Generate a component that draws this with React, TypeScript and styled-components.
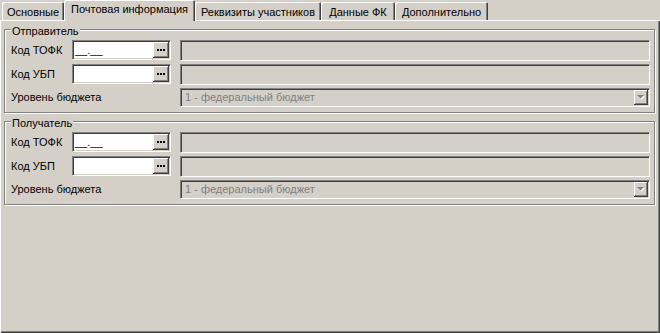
import React from "react";
import styled, { createGlobalStyle, css } from "styled-components";

const GlobalStyle = createGlobalStyle`
  html, body { margin: 0; padding: 0; background: #d4d0c8; }
  body {
    font-family: "Liberation Sans", Arial, sans-serif;
    font-size: 11px;
    color: #000;
  }
  * { box-sizing: border-box; }
`;

const Window = styled.div`
  width: 660px;
  height: 333px;
  background: #d4d0c8;
  display: flex;
  flex-direction: column;
  overflow: hidden;
`;

const TabStrip = styled.div`
  display: flex;
  align-items: flex-end;
  height: 20px;
  padding-left: 2px;
  position: relative;
  z-index: 1;
  flex: none;
`;

const Tab = styled.div<{ $active?: boolean; $w: number }>`
  width: ${(p) => p.$w}px;
  height: ${(p) => (p.$active ? 21 : 18)}px;
  margin-bottom: ${(p) => (p.$active ? -1 : 0)}px;
  padding-top: ${(p) => (p.$active ? 3 : 4)}px;
  line-height: 13px;
  text-align: center;
  white-space: nowrap;
  background: #d4d0c8;
  border-top-left-radius: 2px;
  border-top-right-radius: 2px;
  box-shadow: inset 1px 1px 0 #fff, inset -1px 0 0 #404040,
    inset -2px 0 0 #808080;
`;

const Panel = styled.div`
  flex: none;
  width: 660px;
  height: 313px;
  padding: 9px 5px 0 4px;
  display: flex;
  flex-direction: column;
  gap: 8px;
  box-shadow: inset 1px 1px 0 #fff, inset -1px -1px 0 #404040,
    inset -2px -2px 0 #808080;
`;

const GroupBox = styled.div`
  position: relative;
  height: 84px;
  border: 1px solid #808080;
  box-shadow: inset 1px 1px 0 #fff, 1px 1px 0 #fff;
  padding: 10px 4px 0 6px;
  display: grid;
  grid-template-columns: 52px 99px 1fr;
  grid-template-rows: 21px 21px 19px;
  column-gap: 9px;
  row-gap: 3px;
`;

const Legend = styled.span`
  position: absolute;
  top: -5px;
  left: 6px;
  padding: 0 1px;
  line-height: 13px;
  background: #d4d0c8;
`;

const Label = styled.div<{ $wide?: boolean }>`
  grid-column: ${(p) => (p.$wide ? "1 / 3" : "1")};
  display: flex;
  align-items: center;
  white-space: nowrap;
  line-height: 13px;
`;

const sunken = css`
  border: 1px solid;
  border-color: #808080 #fff #fff #808080;
  box-shadow: inset 1px 1px 0 #404040, inset -1px -1px 0 #d4d0c8;
`;

const raised = css`
  background: #d4d0c8;
  box-shadow: inset -1px -1px 0 #404040, inset 1px 1px 0 #fff,
    inset -2px -2px 0 #808080;
`;

const MaskInput = styled.div`
  grid-column: 2;
  align-self: start;
  height: 20px;
  ${sunken};
  background: #fff;
  padding: 1px;
  display: flex;
  align-items: stretch;
`;

const MaskText = styled.span`
  flex: 1;
  display: flex;
  align-items: center;
  padding-left: 1px;
  padding-top: 1px;
  line-height: 13px;
  white-space: pre;
`;

const DotsButton = styled.div`
  width: 16px;
  ${raised};
  display: flex;
  align-items: center;
  justify-content: center;
  padding: 0 1px 1px 0;
`;

const Field = styled.div`
  grid-column: 3;
  ${sunken};
  background: #d4d0c8;
`;

const Combo = styled.div`
  grid-column: 3;
  ${sunken};
  background: #d4d0c8;
  padding: 1px;
  display: flex;
  align-items: stretch;
`;

const ComboText = styled.span`
  flex: 1;
  display: flex;
  align-items: center;
  padding-left: 3px;
  color: #808080;
  line-height: 13px;
  white-space: nowrap;
`;

const DropButton = styled.div`
  width: 14px;
  ${raised};
  display: flex;
  align-items: center;
  justify-content: center;
  padding: 0 1px 1px 0;
`;

const Dots = () => (
  <svg width="8" height="2" viewBox="0 0 8 2">
    <rect x="0" y="0" width="2" height="2" fill="#000" />
    <rect x="3" y="0" width="2" height="2" fill="#000" />
    <rect x="6" y="0" width="2" height="2" fill="#000" />
  </svg>
);

const Arrow = () => (
  <svg width="8" height="5" viewBox="0 0 8 5">
    <path d="M1 1h7L4.5 4.5z" fill="#fff" />
    <path d="M0 0h7L3.5 3.5z" fill="#808080" />
  </svg>
);

const Group: React.FC<{ title: string }> = ({ title }) => (
  <GroupBox>
    <Legend>{title}</Legend>
    <Label>Код ТОФК</Label>
    <MaskInput>
      <MaskText>__.__</MaskText>
      <DotsButton>
        <Dots />
      </DotsButton>
    </MaskInput>
    <Field />
    <Label>Код УБП</Label>
    <MaskInput>
      <MaskText />
      <DotsButton>
        <Dots />
      </DotsButton>
    </MaskInput>
    <Field />
    <Label $wide>Уровень бюджета</Label>
    <Combo>
      <ComboText>1 - федеральный бюджет</ComboText>
      <DropButton>
        <Arrow />
      </DropButton>
    </Combo>
  </GroupBox>
);

const tabs = [
  { title: "Основные", w: 62 },
  { title: "Почтовая информация", w: 131, active: true },
  { title: "Реквизиты участников", w: 126 },
  { title: "Данные ФК", w: 74 },
  { title: "Дополнительно", w: 93 },
];

export default function App() {
  return (
    <>
      <GlobalStyle />
      <Window>
        <TabStrip>
          {tabs.map((t) => (
            <Tab key={t.title} $w={t.w} $active={t.active}>
              {t.title}
            </Tab>
          ))}
        </TabStrip>
        <Panel>
          <Group title="Отправитель" />
          <Group title="Получатель" />
        </Panel>
      </Window>
    </>
  );
}
